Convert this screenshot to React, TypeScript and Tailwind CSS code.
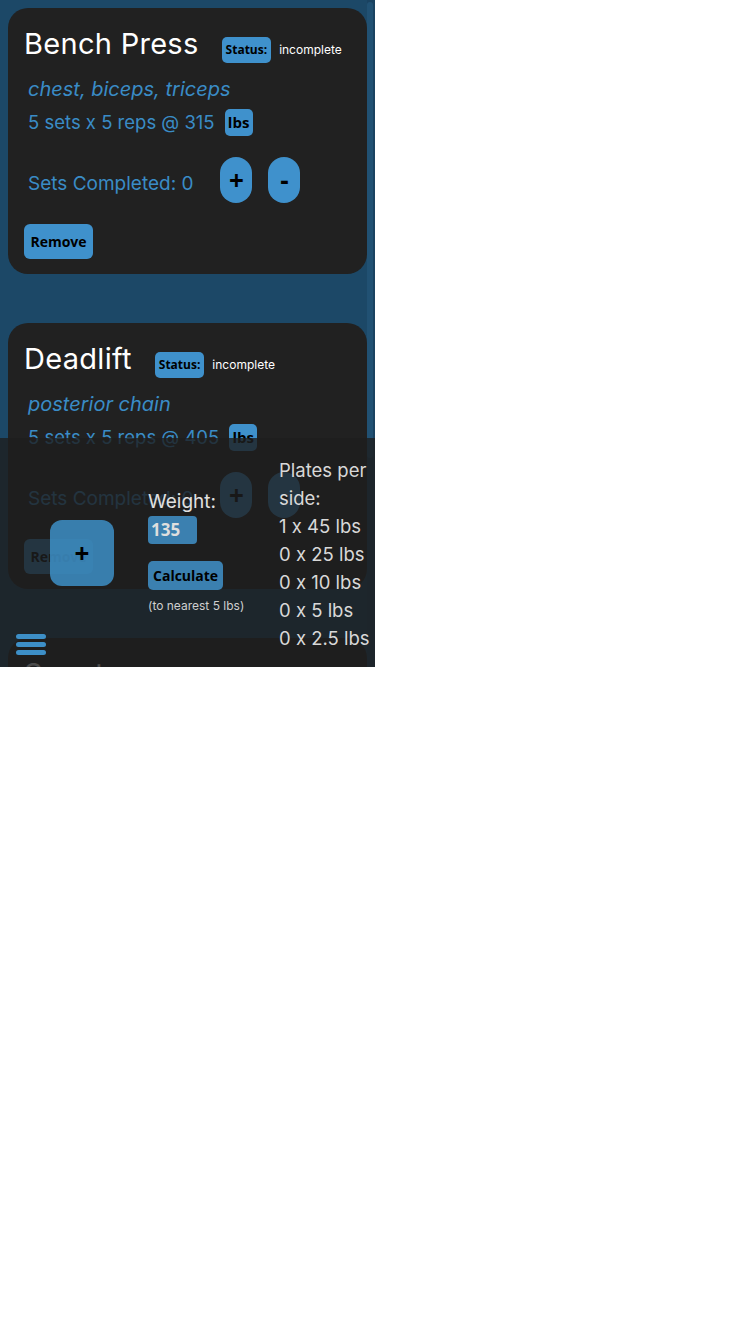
import React from 'react';

interface Exercise {
  name: string;
  muscles: string;
  sets: number;
  reps: number;
  weight: number;
  completed: number;
}

const EXERCISES: Exercise[] = [
  { name: 'Bench Press', muscles: 'chest, biceps, triceps', sets: 5, reps: 5, weight: 315, completed: 0 },
  { name: 'Deadlift', muscles: 'posterior chain', sets: 5, reps: 5, weight: 405, completed: 0 },
  { name: 'Squat', muscles: 'quads, glutes, hamstrings', sets: 5, reps: 5, weight: 365, completed: 0 },
];

const PLATES = [
  { count: 1, size: '45' },
  { count: 0, size: '25' },
  { count: 0, size: '10' },
  { count: 0, size: '5' },
  { count: 0, size: '2.5' },
];

function ExerciseCard({ ex }: { ex: Exercise }) {
  return (
    <div className="rounded-[20px] bg-[#212121] px-4 pt-[18px] pb-[15px]">
      {/* Header */}
      <div className="flex items-baseline">
        <h2 className="text-[29px] leading-[36px] font-normal tracking-[0.01em] text-white">{ex.name}</h2>
        <span className="ml-[23px] rounded-[5px] bg-[#3f91cc] px-[4px] py-[5px] font-['Open_Sans',sans-serif] text-[12px] leading-[16px] font-bold text-black">
          Status:
        </span>
        <span className="ml-2 text-[12px] text-white">incomplete</span>
      </div>

      <div className="pl-1 text-[#3a8cc6]">
        <p className="mt-3 text-[20px] leading-[28px] italic">{ex.muscles}</p>
        <div className="mt-[6px] flex h-[27px] items-center">
          <span className="text-[18.5px]">
            {ex.sets} sets x {ex.reps} reps @ {ex.weight}
          </span>
          <span className="ml-[10px] flex h-[27px] w-[28px] items-center justify-center rounded-[5px] bg-[#3f91cc] font-['Open_Sans',sans-serif] text-[15px] font-bold text-black">
            lbs
          </span>
        </div>

        {/* Sets counter */}
        <div className="mt-[21px] flex items-center">
          <span className="pt-2 text-[19px]">Sets Completed: {ex.completed}</span>
          <button className="ml-[27px] flex h-[46px] w-8 items-center justify-center rounded-2xl bg-[#3f91cc] font-['Open_Sans',sans-serif] text-[26px] font-bold text-black">
            +
          </button>
          <button className="ml-4 flex h-[46px] w-8 items-center justify-center rounded-2xl bg-[#3f91cc] font-['Open_Sans',sans-serif] text-[26px] font-bold text-black">
            -
          </button>
        </div>
      </div>

      <button className="mt-[21px] h-[35px] w-[69px] rounded-[6px] bg-[#3f91cc] font-['Open_Sans',sans-serif] text-[14px] font-bold text-black">
        Remove
      </button>
    </div>
  );
}

export default function App() {
  return (
    <div className="relative flex h-[667px] w-[375px] overflow-hidden bg-[#1c4867] font-['Inter',sans-serif] [font-feature-settings:'calt'_0]">
      {/* Workout list */}
      <div className="flex w-[367px] flex-col gap-[49px] pt-2 pl-2">
        {EXERCISES.map((ex) => (
          <ExerciseCard key={ex.name} ex={ex} />
        ))}
      </div>

      {/* Scrollbar */}
      <div className="w-2 bg-[#1a4260] pt-[2px]">
        <div className="h-[456px] w-[6px] rounded-full bg-[#215173]" />
      </div>

      {/* Plate calculator panel */}
      <div className="absolute inset-x-0 bottom-0 h-[229px] bg-[#1e1e1e]/80">
        <div className="flex items-start">
          <button className="mt-[82px] ml-[50px] flex h-[66px] w-16 items-center justify-center rounded-[12px] bg-[#3d8fc7]/85 font-['Open_Sans',sans-serif] text-[26px] font-bold text-black">
            +
          </button>

          <div className="mt-[50px] ml-[34px] w-[131px]">
            <p className="text-[19px] leading-[28px] text-[#e0e0e0]">Weight:</p>
            <div className="h-[28px] w-[49px] rounded-[4px] bg-[#3b80b0] px-[3px] font-['Open_Sans',sans-serif] text-[17px] leading-[28px] font-bold text-[#dedede]">
              135
            </div>
            <button className="mt-[17px] h-[29px] rounded-[5px] bg-[#3b80b0] px-[5px] font-['Open_Sans',sans-serif] text-[14px] font-bold text-black">
              Calculate
            </button>
            <p className="mt-2 text-[12px] leading-4 text-[#cfcfcf]">(to nearest 5 lbs)</p>
          </div>

          <div className="mt-[18px] w-[96px] text-[18.5px] leading-[28px] text-[#d8d8d8]">
            <p>Plates per side:</p>
            {PLATES.map((p) => (
              <p key={p.size}>
                {p.count} x {p.size} lbs
              </p>
            ))}
          </div>
        </div>

        {/* Menu button */}
        <div className="absolute top-[196px] left-4 flex w-[30px] flex-col gap-[3px]">
          <span className="h-[5px] rounded-full bg-[#3d8fc7]" />
          <span className="h-[5px] rounded-full bg-[#3d8fc7]" />
          <span className="h-[5px] rounded-full bg-[#3d8fc7]" />
        </div>
      </div>
    </div>
  );
}
